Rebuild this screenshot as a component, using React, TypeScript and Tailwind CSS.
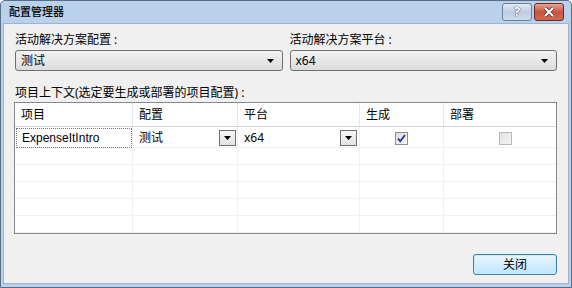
import React from "react";

const FONT = { fontFamily: '"Noto Sans", "Noto Sans CJK SC", sans-serif' };
const LATIN = { fontFamily: '"Liberation Sans", "Noto Sans CJK SC", sans-serif' };

function Arrow() {
  return (
    <svg width="7" height="4" viewBox="0 0 7 4" className="block">
      <path d="M0 0h7L3.5 4z" fill="#000" />
    </svg>
  );
}

function Combo({ value }: { value: string }) {
  return (
    <div className="flex h-[21px] items-center justify-between rounded-[3px] border border-[#707070] bg-gradient-to-b from-[#f2f2f2] to-[#dcdcdc] pl-[5px] pr-[8px]">
      <span className="text-[12px] leading-none text-black">{value}</span>
      <Arrow />
    </div>
  );
}

function CellDrop() {
  return (
    <div className="flex h-[16px] w-[17px] items-center justify-center border border-[#6f6f6f] bg-gradient-to-b from-[#f7f7f7] to-[#e2e2e2]">
      <Arrow />
    </div>
  );
}

function Check({ checked, disabled }: { checked?: boolean; disabled?: boolean }) {
  return (
    <div
      className={`flex h-[13px] w-[13px] items-center justify-center border ${
        disabled
          ? "border-[#b8b8b8] bg-gradient-to-br from-[#e2e2e2] to-[#f4f4f4]"
          : "border-[#8f8f8f] bg-gradient-to-br from-[#dcdcdc] to-[#fbfbfb]"
      }`}
    >
      {checked ? (
        <svg width="9" height="9" viewBox="0 0 9 9">
          <path d="M1 4.5l2.2 2.8L8 1" stroke="#21349c" strokeWidth="1.8" fill="none" />
        </svg>
      ) : null}
    </div>
  );
}

export default function App() {
  const cols = "grid-cols-[118px_105px_122px_84px_1fr]";
  const headers = ["项目", "配置", "平台", "生成", "部署"];

  return (
    <div className="h-[288px] w-[572px] bg-white" style={FONT}>
      <div className="flex h-[288px] w-[572px] flex-col rounded-t-[5px] border border-[#5b6d83] bg-[#b9d1ea] px-[2px] pb-[3px]">
        {/* title bar */}
        <div className="flex h-[22px] shrink-0 items-center justify-between pl-[6px] pr-[5px]">
          <span className="text-[11px] font-medium text-black">配置管理器</span>
          <div className="flex items-start gap-[2px] pb-[1px]">
            <div className="flex h-[18px] w-[30px] items-center justify-center rounded-[3px] border border-[#6d7f96] bg-gradient-to-b from-[#e3ecf6] via-[#bccde2] to-[#cfdcec] text-[13px] font-bold leading-none text-white [text-shadow:0_0_1px_#333,0_0_1px_#333]">
              ?
            </div>
            <div className="flex h-[18px] w-[30px] items-center justify-center rounded-[3px] border border-[#6a2a24] bg-gradient-to-b from-[#e8a393] via-[#c9533f] to-[#d06a50]">
              <svg width="12" height="10" viewBox="0 0 12 10">
                <path d="M2 1l8 8M10 1L2 9" stroke="#3a3a3a" strokeWidth="3.4" />
                <path d="M2 1l8 8M10 1L2 9" stroke="#fff" strokeWidth="2" />
              </svg>
            </div>
          </div>
        </div>

        {/* content */}
        <div className="flex flex-1 flex-col border border-[#9cb4cf] bg-[#f0f0f0] pl-[11px] pr-[11px] pt-[8px]">
          <div className="flex gap-[7px]">
            <div className="flex flex-1 flex-col gap-[2px]">
              <span className="text-[12px] leading-[16px] text-black">活动解决方案配置 :</span>
              <Combo value="测试" />
            </div>
            <div className="flex flex-1 flex-col gap-[2px]">
              <span className="text-[12px] leading-[16px] text-black">活动解决方案平台 :</span>
              <Combo value="x64" />
            </div>
          </div>

          <span className="mt-[14px] text-[12px] leading-[16px] text-black">
            项目上下文(选定要生成或部署的项目配置) :
          </span>

          {/* grid */}
          <div className="-ml-px mt-[1px] h-[132px] overflow-hidden border border-[#828790] bg-white">
            <div className={`grid ${cols} h-[24px] border-b border-[#d5d5d5]`}>
              {headers.map((h) => (
                <div
                  key={h}
                  className="flex items-center border-r border-[#e3e8f0] pl-[6px] text-[12px] text-black last:border-r-0"
                >
                  {h}
                </div>
              ))}
            </div>
            <div className={`grid ${cols} h-[21px] border-b border-[#f0f0f0]`}>
              <div className="flex items-center border-r border-[#f0f0f0] py-[1px] pl-[1px]">
                <div
                  className="flex h-full w-full items-center border border-dotted border-[#777] pl-[5px] text-[12px] text-black"
                  style={LATIN}
                >
                  ExpenseItIntro
                </div>
              </div>
              <div className="flex items-center justify-between border-r border-[#f0f0f0] pl-[6px] pr-[1px] text-[12px] text-black">
                测试
                <CellDrop />
              </div>
              <div className="flex items-center justify-between border-r border-[#f0f0f0] pl-[6px] pr-[2px] text-[12px] text-black">
                x64
                <CellDrop />
              </div>
              <div className="flex items-center justify-center border-r border-[#f0f0f0]">
                <Check checked />
              </div>
              <div className="flex items-center justify-center pl-[10px]">
                <Check disabled />
              </div>
            </div>
            {[0, 1, 2, 3, 4].map((r) => (
              <div key={r} className={`grid ${cols} h-[17px] border-b border-[#f0f0f0]`}>
                {[0, 1, 2, 3].map((c) => (
                  <div key={c} className="border-r border-[#f0f0f0]" />
                ))}
                <div />
              </div>
            ))}
          </div>

          <div className="mt-[20px] flex justify-end">
            <button className="flex h-[21px] w-[84px] items-center justify-center rounded-[3px] border border-[#3c7fb1] bg-gradient-to-b from-[#eaf6fd] to-[#bee6fd] text-[12px] text-black shadow-[inset_0_0_0_1px_#c7ecfb]">
              关闭
            </button>
          </div>
        </div>
      </div>
    </div>
  );
}
